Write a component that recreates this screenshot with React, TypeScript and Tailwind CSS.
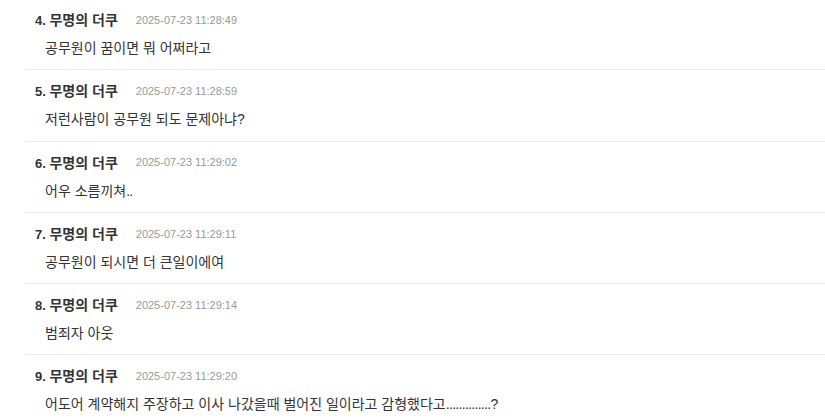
import React from "react"

const comments = [
  { no: 4, time: "2025-07-23 11:28:49", text: "공무원이 꿈이면 뭐 어쩌라고", tail: "" },
  { no: 5, time: "2025-07-23 11:28:59", text: "저런사람이 공무원 되도 문제아냐?", tail: "" },
  { no: 6, time: "2025-07-23 11:29:02", text: "어우 소름끼쳐", tail: ".." },
  { no: 7, time: "2025-07-23 11:29:11", text: "공무원이 되시면 더 큰일이에여", tail: "" },
  { no: 8, time: "2025-07-23 11:29:14", text: "범죄자 아웃", tail: "" },
  { no: 9, time: "2025-07-23 11:29:20", text: "어도어 계약해지 주장하고 이사 나갔을때 벌어진 일이라고 감형했다고", tail: "..............?" },
]

export default function App() {
  return (
    <div className="w-[825px] h-[419px] overflow-hidden bg-white font-['Liberation_Sans','Noto_Sans_CJK_KR',sans-serif]">
      <ul className="-mt-px ml-[25px]">
        {comments.map((c) => (
          <li key={c.no} className="border-b border-[#e9e9e9] pt-3 pb-[11.25px]">
            <div className="flex items-center h-[18px] pl-[10px]">
              <span className="font-bold text-[#333]">
                <span className="text-[13px]">{c.no}. </span>
                <span className="text-[14px]">무명의 더쿠</span>
              </span>
              <span className="ml-[18px] text-[11px] text-[#999]">{c.time}</span>
            </div>
            <p className="mt-[9px] h-5 leading-5 pl-5 text-[14px] text-[#333]">
              {c.text}
              <span className="tracking-[-0.7px]">{c.tail}</span>
            </p>
          </li>
        ))}
      </ul>
    </div>
  )
}
